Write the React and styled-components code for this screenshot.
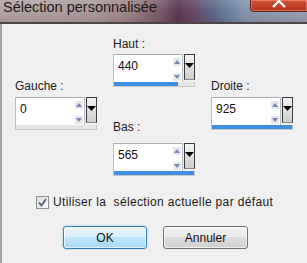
import React from "react";
import styled, { createGlobalStyle } from "styled-components";

const Global = createGlobalStyle`
  html, body { margin: 0; padding: 0; background: #f0f0f0; }
  body { width: 307px; height: 263px; overflow: hidden; font-family: "Liberation Sans", Arial, sans-serif; }
`;

const Window = styled.div`
  width: 307px;
  height: 263px;
  display: flex;
  flex-direction: column;
  background: #f0f0f0;
  overflow: hidden;
`;

const TitleBar = styled.div`
  height: 22px;
  flex: none;
  display: flex;
  align-items: flex-start;
  border-bottom: 2px solid #4b4448;
  background:
    linear-gradient(180deg, rgba(255,255,255,0.12) 0%, rgba(255,255,255,0) 50%, rgba(60,20,30,0.12) 100%),
    linear-gradient(90deg, #b4a6a6 0%, #ad9c9c 30%, #9c8488 42%, #7a5c6c 52%, #5c3850 58%, #684868 63%, #5e6c8c 70%, #6c88a8 76%, #8896ac 80%, #9ba2b4 100%);
`;

const Title = styled.div`
  font-family: "Liberation Sans", Arial, sans-serif;
  font-size: 14.5px;
  line-height: 15px;
  color: #1c1818;
  margin-top: 0;
  padding-left: 3px;
  white-space: nowrap;
`;

const CloseButton = styled.div`
  margin-left: auto;
  width: 57px;
  height: 12px;
  box-sizing: border-box;
  border: 1px solid #5a2418;
  border-top: none;
  border-right: none;
  border-radius: 0 0 0 4px;
  background: linear-gradient(180deg, #d0503a 0%, #c43c24 60%, #b13420 100%);
  box-shadow: inset 0 0 0 1px rgba(255, 170, 150, 0.45);
  display: flex;
  justify-content: center;
  overflow: hidden;
`;

const Body = styled.div`
  flex: 1;
  display: flex;
  flex-direction: column;
  border-left: 2px solid #a4a4a4;
`;

const Fields = styled.div`
  display: flex;
  align-items: flex-start;
  gap: 16px;
  padding: 13px 0 0 13px;
`;

const Column = styled.div`
  display: flex;
  flex-direction: column;
  margin-top: ${(p) => p.$offset || 0}px;
`;

const Label = styled.div`
  font-size: 12px;
  line-height: 14px;
  color: #1a1a1a;
  margin-top: ${(p) => p.$top || 0}px;
  margin-bottom: ${(p) => p.$gap}px;
  white-space: nowrap;
`;

const Widget = styled.div`
  width: 82px;
  height: 33px;
  display: flex;
  flex-direction: column;
`;

const WidgetRow = styled.div`
  display: flex;
  align-items: flex-start;
  height: 28px;
`;

const InputBox = styled.div`
  width: 70px;
  height: 28px;
  box-sizing: border-box;
  background: #fff;
  border: 1px solid #b9bcc2;
  border-bottom: none;
  border-top-color: #abadb3;
  display: flex;
  justify-content: space-between;
`;

const Value = styled.span`
  font-size: 12px;
  line-height: 14px;
  padding: 4px 0 0 4px;
  color: #111;
`;

const Spinner = styled.div`
  display: flex;
  flex-direction: column;
  justify-content: space-between;
  padding: 3px 1px 1px 0;
`;

const Dropdown = styled.div`
  width: 11px;
  height: 26px;
  margin-left: 1px;
  box-sizing: border-box;
  border: 1px solid #3a3a3a;
  border-bottom-color: #8a8a8a;
  background: linear-gradient(180deg, #f4f4f4 0%, #dcdcdc 60%, #cfcfcf 100%);
  display: flex;
  justify-content: center;
  padding-top: 8px;
`;

const Bar = styled.div`
  height: 5px;
  box-sizing: border-box;
  background: #e6e6e6;
  border: 1px solid #c8c8c8;
  border-top: none;
  display: flex;
`;

const BarFill = styled.div`
  height: 100%;
  background: #3f8fe0;
`;

const CheckRow = styled.label`
  display: flex;
  align-items: center;
  gap: 4px;
  margin: 19px 0 0 34px;
  font-size: 12px;
  line-height: 14px;
  letter-spacing: 0.35px;
  color: #1a1a1a;
  white-space: pre;
`;

const Box = styled.div`
  width: 13px;
  height: 13px;
  box-sizing: border-box;
  border: 1px solid #8e8f8f;
  background: linear-gradient(135deg, #dcdcdc 0%, #f8f8f8 100%);
  display: flex;
  align-items: center;
  justify-content: center;
`;

const Buttons = styled.div`
  display: flex;
  gap: 16px;
  margin: 17px 0 0 61px;
`;

const Button = styled.div`
  width: ${(p) => p.$w}px;
  height: 23px;
  box-sizing: border-box;
  border-radius: 3px;
  display: flex;
  align-items: center;
  justify-content: center;
  font-size: 12px;
  color: #111;
  border: 1px solid ${(p) => (p.$primary ? "#3c7fb1" : "#707070")};
  background: ${(p) =>
    p.$primary
      ? "linear-gradient(180deg, #eaf6fd 0%, #d9f0fc 45%, #bee6fd 50%, #a7d9f5 100%)"
      : "linear-gradient(180deg, #f2f2f2 0%, #ebebeb 45%, #dddddd 50%, #cfcfcf 100%)"};
  box-shadow: inset 0 0 0 1px rgba(255,255,255,0.65)
    ${(p) => (p.$primary ? ", 0 0 2px #7fc4ec" : "")};
`;

const Arrow = ({ up }) => (
  <svg width="8" height="8" viewBox="0 0 8 8">
    <rect x="0" y="0" width="8" height="8" fill="#e4e8f0" />
    {up ? (
      <path d="M1 6 L4 2 L7 6 Z" fill="#7585ab" />
    ) : (
      <path d="M1 2 L4 6 L7 2 Z" fill="#7585ab" />
    )}
  </svg>
);

const Field = ({ value, fill }) => (
  <Widget>
    <WidgetRow>
      <InputBox>
        <Value>{value}</Value>
        <Spinner>
          <Arrow up />
          <Arrow />
        </Spinner>
      </InputBox>
      <Dropdown>
        <svg width="9" height="5" viewBox="0 0 9 5">
          <path d="M0 0 L9 0 L4.5 5 Z" fill="#000" />
        </svg>
      </Dropdown>
    </WidgetRow>
    <Bar>
      <BarFill style={{ width: `${fill}%` }} />
    </Bar>
  </Widget>
);

export default function App() {
  return (
    <Window>
      <Global />
      <TitleBar>
        <Title>Sélection personnalisée</Title>
        <CloseButton>
          <svg width="16" height="8" viewBox="0 0 16 8">
            <path d="M2 7 L8 1 L14 7" stroke="#fff" strokeWidth="2.4" fill="none" />
          </svg>
        </CloseButton>
      </TitleBar>
      <Body>
        <Fields>
          <Column $offset={42}>
            <Label $gap={4}>Gauche :</Label>
            <Field value="0" fill={0} />
          </Column>
          <Column>
            <Label $gap={3}>Haut :</Label>
            <Field value="440" fill={80} />
            <Label $top={33} $gap={9}>Bas :</Label>
            <Field value="565" fill={100} />
          </Column>
          <Column $offset={42}>
            <Label $gap={4}>Droite :</Label>
            <Field value="925" fill={100} />
          </Column>
        </Fields>
        <CheckRow>
          <Box>
            <svg width="9" height="9" viewBox="0 0 9 9">
              <path d="M1 4.5 L3.5 7.5 L8 1" stroke="#4a5f86" strokeWidth="1.8" fill="none" />
            </svg>
          </Box>
          {"Utiliser la  sélection actuelle par défaut"}
        </CheckRow>
        <Buttons>
          <Button $w={84} $primary>OK</Button>
          <Button $w={85}>Annuler</Button>
        </Buttons>
      </Body>
    </Window>
  );
}
